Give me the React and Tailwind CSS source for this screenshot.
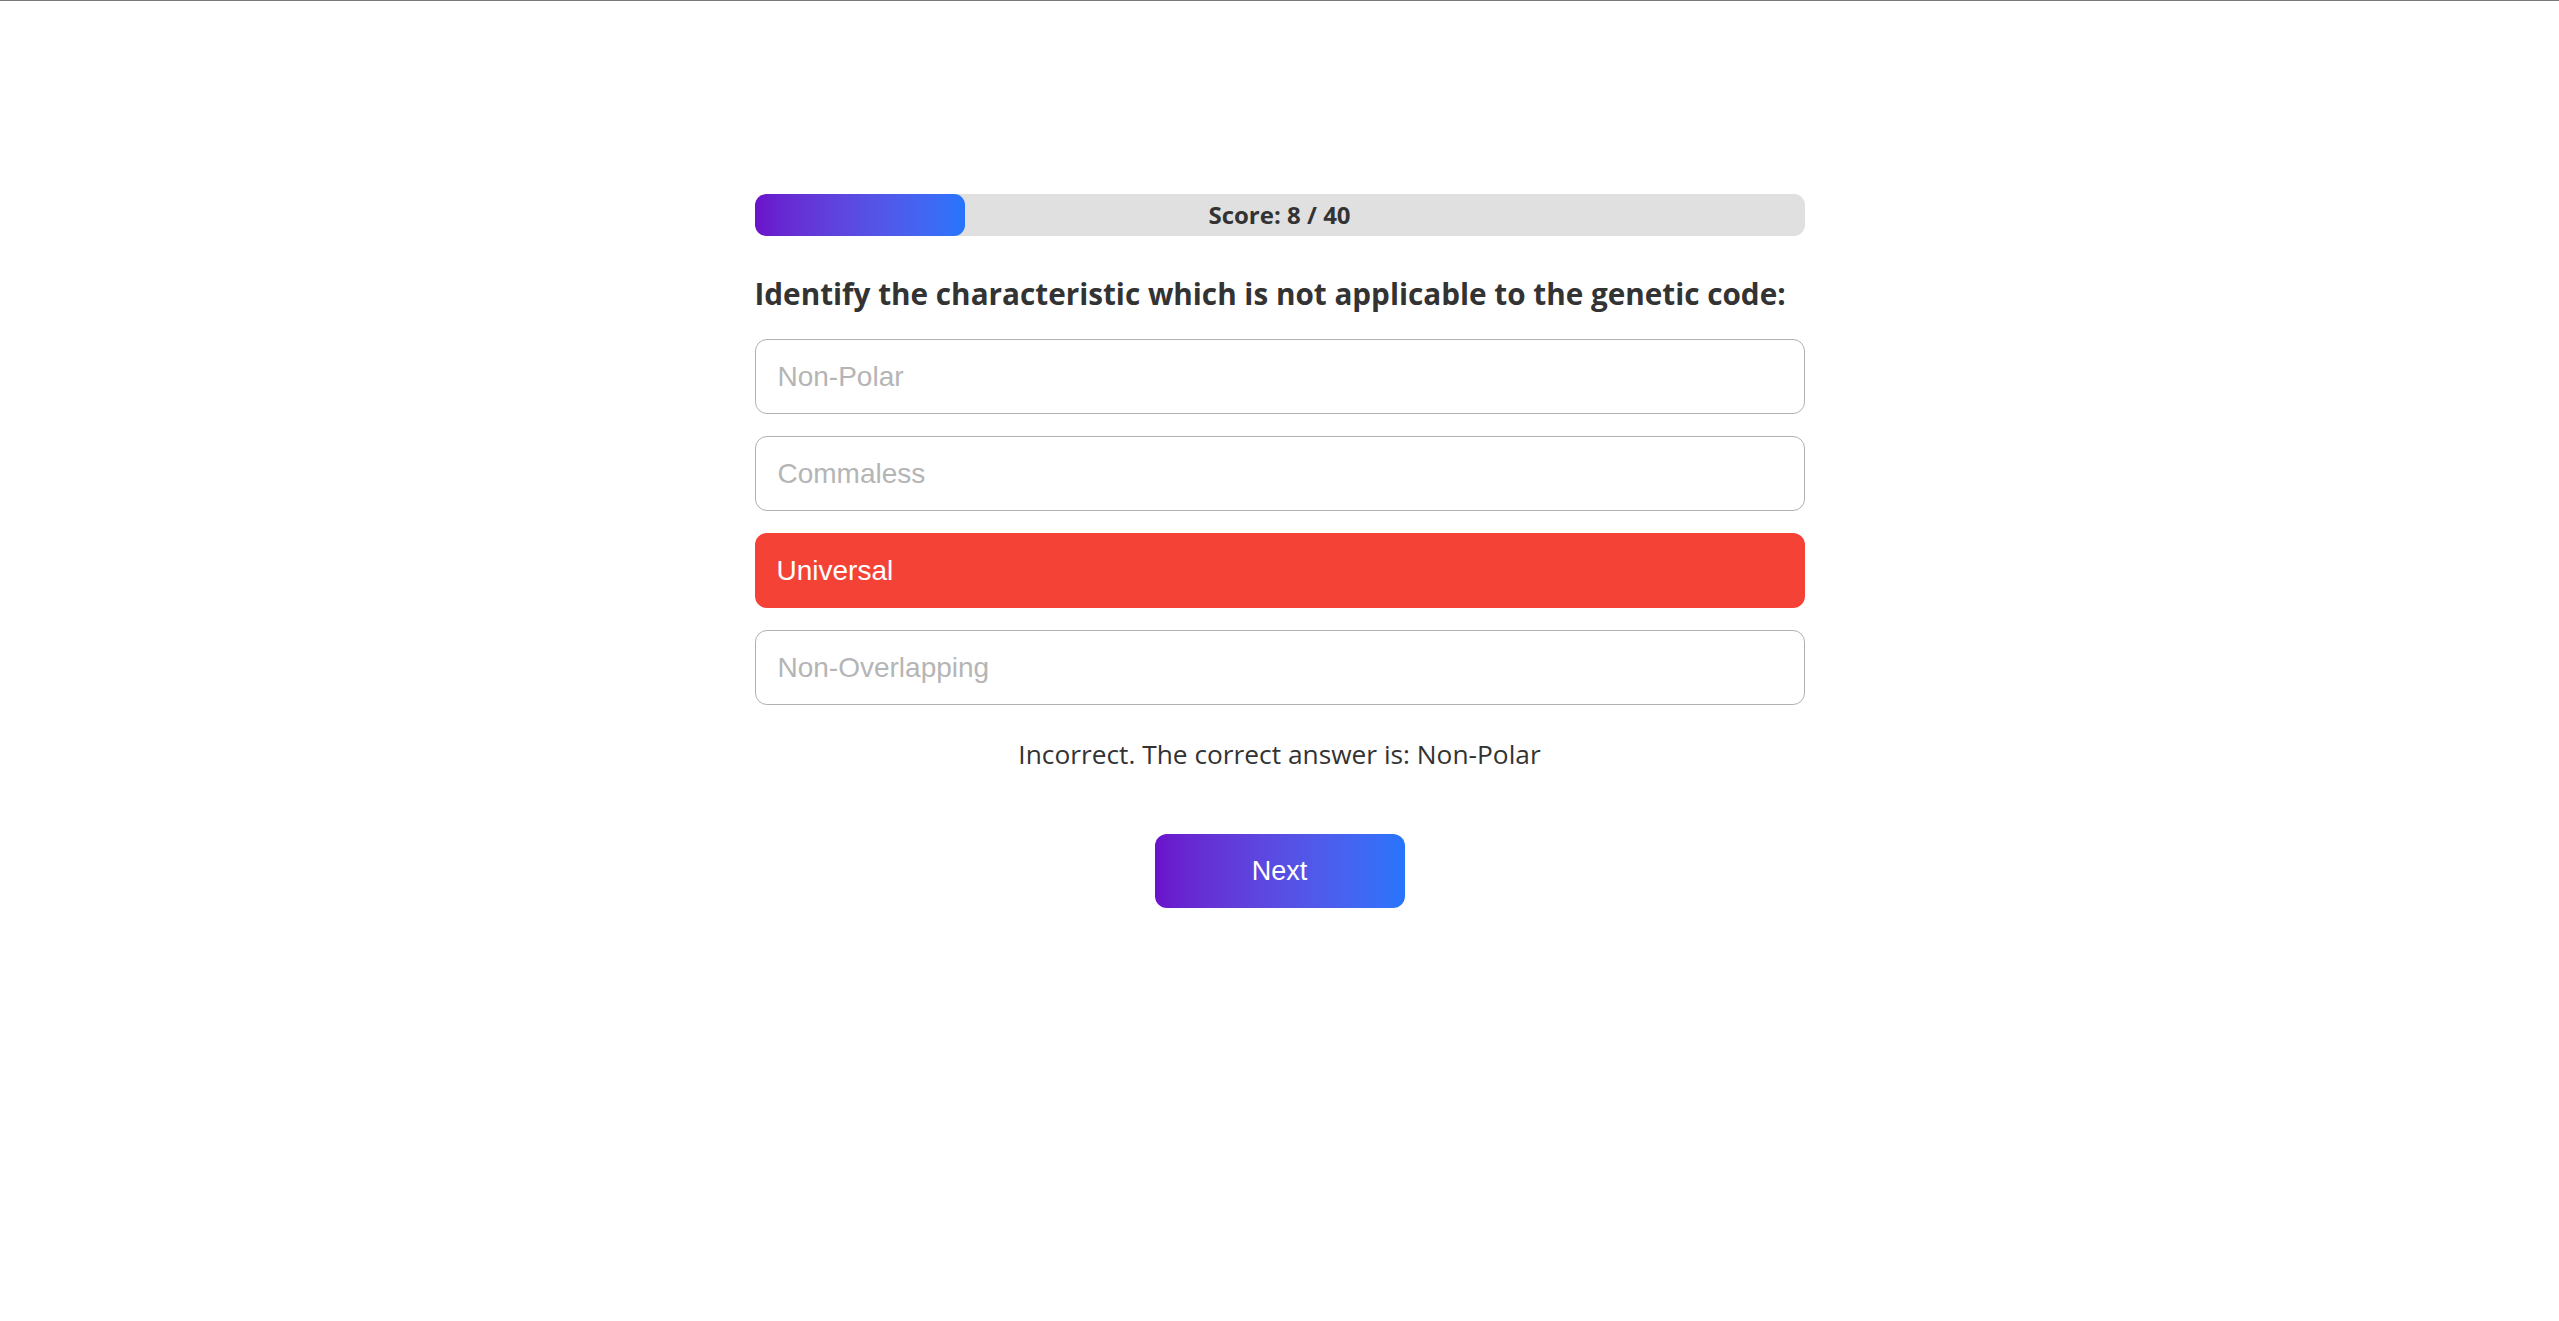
import React from "react";

const options = ["Non-Polar", "Commaless", "Universal", "Non-Overlapping"];

export default function App() {
  const selected = "Universal";
  const score = 8;
  const total = 40;

  return (
    <div className="min-h-screen bg-white border-t border-[#7a7a7a]">
      <div className="w-[1050px] mx-auto pt-[193px] font-['Open_Sans',sans-serif] text-[#333]">
        {/* progress */}
        <div className="relative h-[42px] rounded-[11px] bg-[#e0e0e0] overflow-hidden">
          <div
            className="h-full rounded-[11px] bg-gradient-to-r from-[#6a11cb] to-[#2575fc]"
            style={{ width: `${(score / total) * 100}%` }}
          />
          <div className="absolute inset-0 flex items-center justify-center text-[24px] font-bold text-[#333]">
            Score: {score} / {total}
          </div>
        </div>

        {/* question */}
        <h2 className="mt-[40px] text-[29.7px] font-bold leading-[36px] text-[#333]">
          Identify the characteristic which is not applicable to the genetic code:
        </h2>

        <div className="mt-[27px] flex flex-col gap-[22px]">
          {options.map((opt) => (
            <button
              key={opt}
              className={
                opt === selected
                  ? "h-[75px] w-full rounded-[12px] bg-[#f44336] px-[22px] text-left font-['Liberation_Sans',Arial,sans-serif] text-[28px] text-white"
                  : "h-[75px] w-full rounded-[12px] border border-[#b0b0b0] bg-white px-[22px] text-left font-['Liberation_Sans',Arial,sans-serif] text-[28px] text-[#b5b5b5]"
              }
            >
              {opt}
            </button>
          ))}
        </div>

        <p className="mt-[31px] text-center text-[26.3px] leading-[36px] text-[#333]">
          Incorrect. The correct answer is: {options[0]}
        </p>

        <div className="mt-[62px] flex justify-center">
          <button className="h-[74px] w-[250px] rounded-[12px] bg-gradient-to-r from-[#6a11cb] to-[#2575fc] font-['Liberation_Sans',Arial,sans-serif] text-[27px] text-white">
            Next
          </button>
        </div>
      </div>
    </div>
  );
}
